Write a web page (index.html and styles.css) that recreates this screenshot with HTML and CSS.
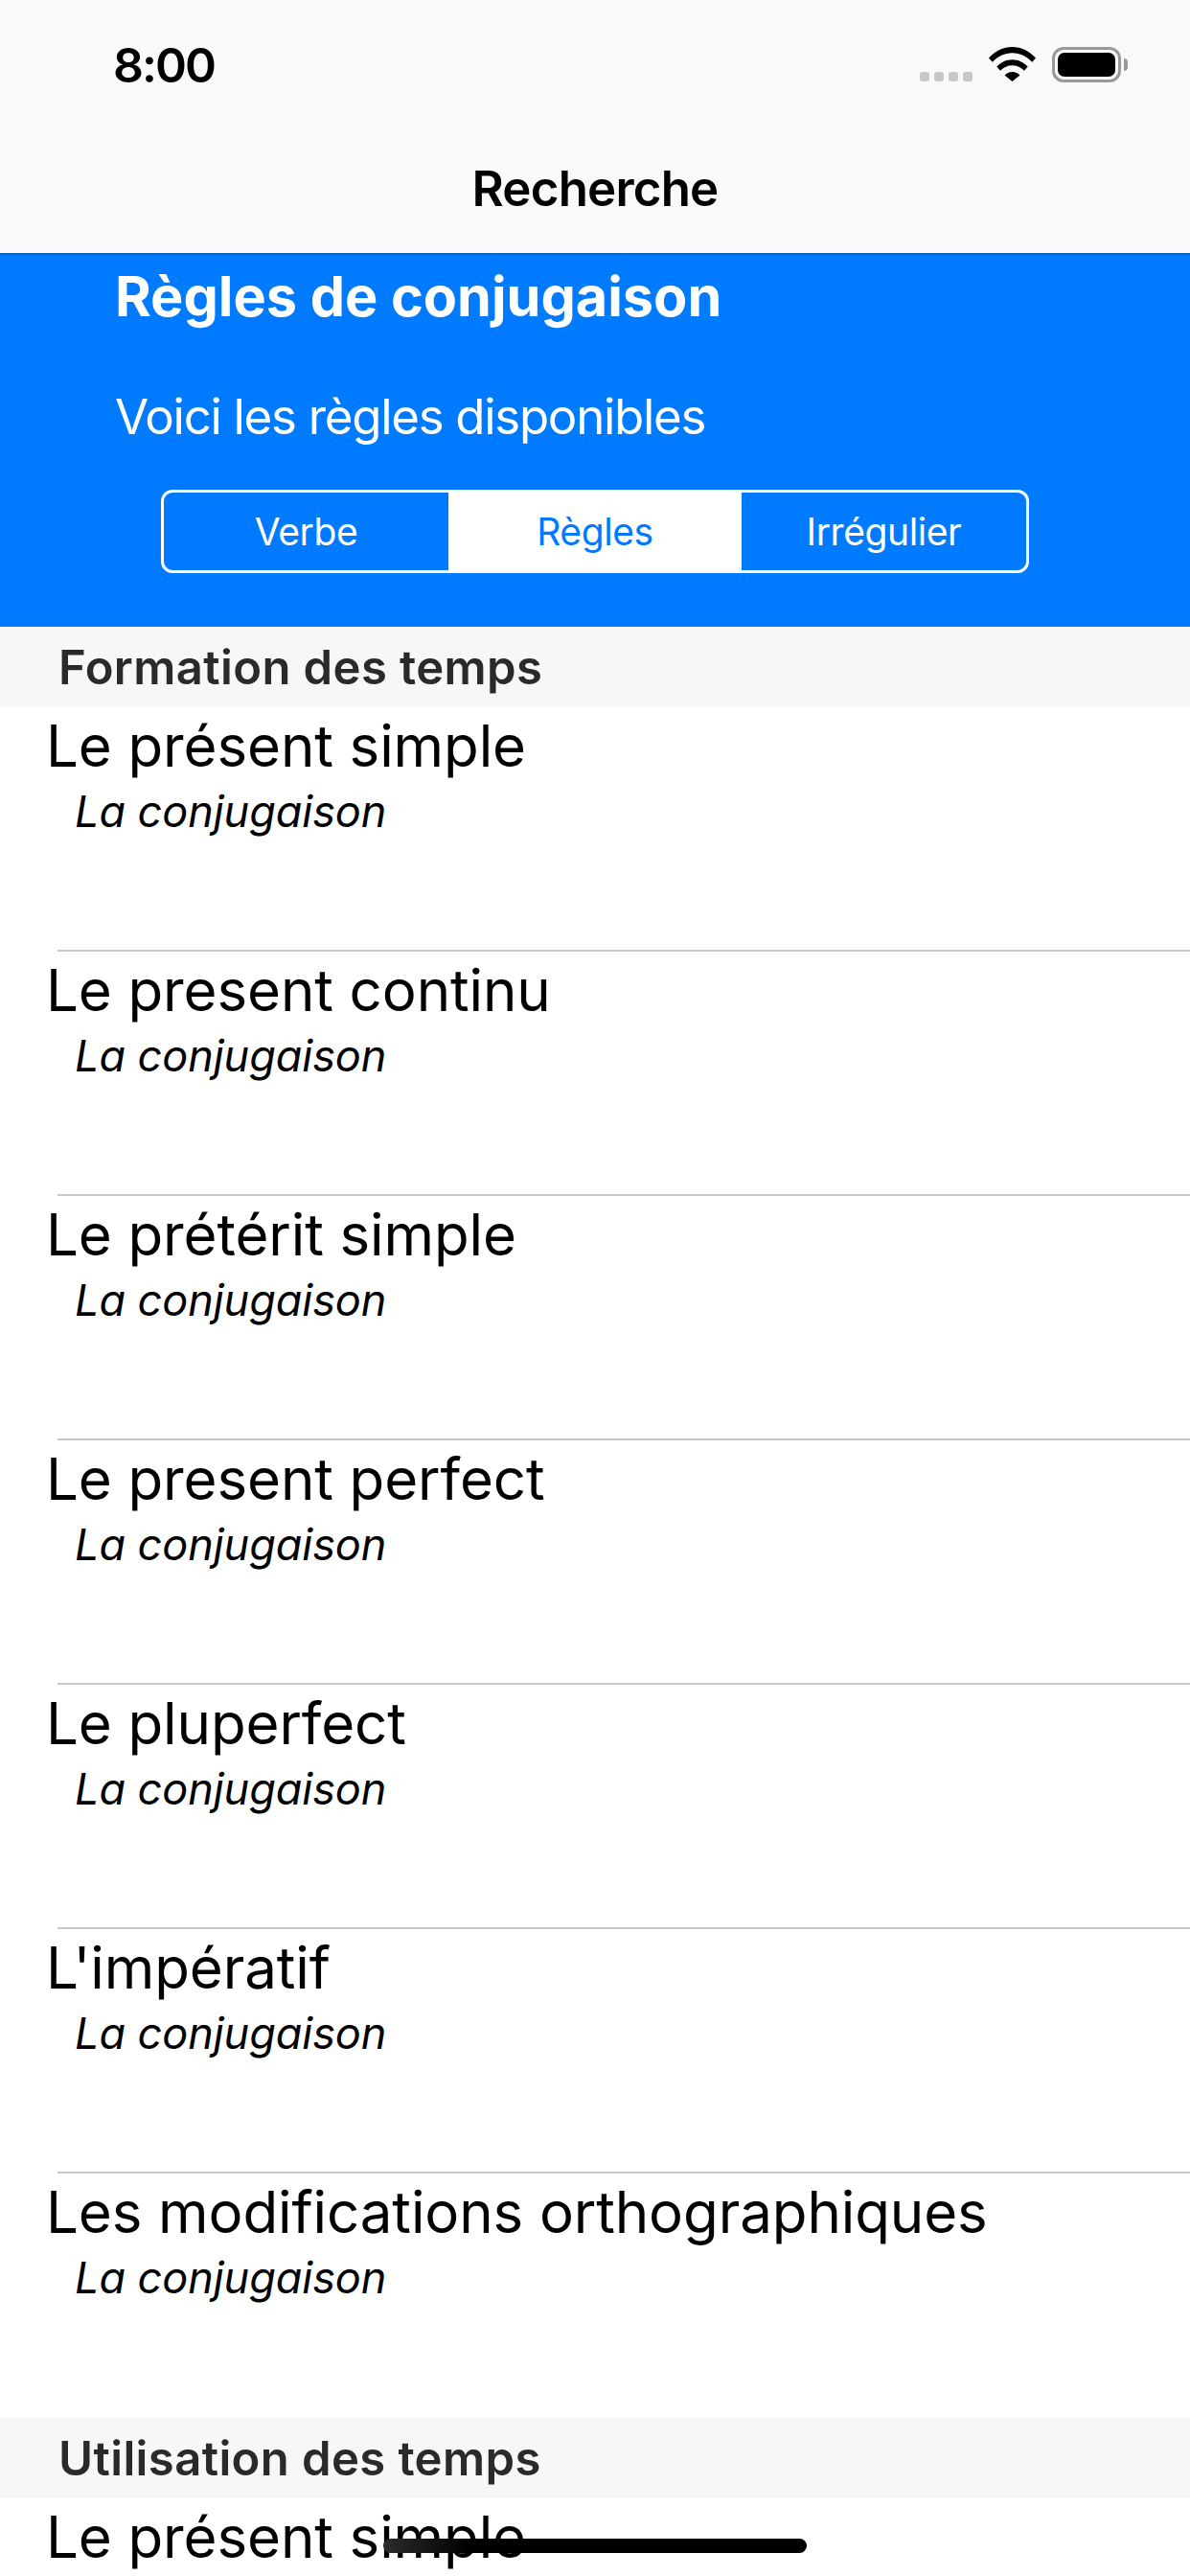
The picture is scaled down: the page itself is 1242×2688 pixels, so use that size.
FILE: index.html
```html
<!DOCTYPE html>
<html lang="fr">
<head>
<meta charset="utf-8">
<title>Recherche</title>
<link rel="stylesheet" href="styles.css">
</head>
<body>
<div class="screen">
  <header class="topbar">
    <div class="status">
      <span class="time">8:00</span>
      <div class="status-icons">
        <div class="signal"><i></i><i></i><i></i><i></i></div>
        <svg class="wifi" viewBox="0 0 49 36" width="49" height="36"><path d="M0 11.6C6.500 4.300 15 0 24.500 0S42.500 4.300 49 11.600L45.300 15.800C39.800 9.800 32.500 6.200 24.500 6.200S9.200 9.800 3.700 15.800Z"/><path d="M8.300 20.500C12.500 16 18.200 13.200 24.500 13.200S36.500 16 40.700 20.500L37 24.700C33.700 21.200 29.300 19.200 24.500 19.200S15.300 21.200 12 24.700Z"/><path d="M16.500 29.500C18.600 27.300 21.400 26 24.500 26S30.400 27.300 32.500 29.500L24.500 36Z"/></svg>
        <div class="battery"><div class="battery-fill"></div></div>
        <div class="battery-cap"></div>
      </div>
    </div>
    <div class="nav-title">Recherche</div>
  </header>
  <section class="hero">
    <h1 class="hero-title">Règles de conjugaison</h1>
    <p class="hero-sub">Voici les règles disponibles</p>
    <div class="segments">
      <div class="segment">Verbe</div>
      <div class="segment active">Règles</div>
      <div class="segment">Irrégulier</div>
    </div>
  </section>
  <main class="list">
    <h2 class="section-head">Formation des temps</h2>
    <div class="row"><div class="row-title">Le présent simple</div><div class="row-sub">La conjugaison</div></div>
    <div class="row"><div class="row-title">Le present continu</div><div class="row-sub">La conjugaison</div></div>
    <div class="row"><div class="row-title">Le prétérit simple</div><div class="row-sub">La conjugaison</div></div>
    <div class="row"><div class="row-title">Le present perfect</div><div class="row-sub">La conjugaison</div></div>
    <div class="row"><div class="row-title">Le pluperfect</div><div class="row-sub">La conjugaison</div></div>
    <div class="row"><div class="row-title">L'impératif</div><div class="row-sub">La conjugaison</div></div>
    <div class="row last"><div class="row-title">Les modifications orthographiques</div><div class="row-sub">La conjugaison</div></div>
    <h2 class="section-head">Utilisation des temps</h2>
    <div class="row peek"><div class="row-title">Le présent simple</div></div>
  </main>
  <div class="home-indicator"></div>
</div>
</body>
</html>
```
FILE: styles.css
```css
* { box-sizing: border-box; }
html, body { margin: 0; padding: 0; background: #fff; }
body { font-family: Inter, "Liberation Sans", sans-serif; color: #000; }
.screen { position: relative; width: 1242px; height: 2688px; overflow: hidden; background: #fff; }

.topbar { height: 264px; background: #f9f9f9; display: flex; flex-direction: column; }
.status { height: 132px; display: flex; align-items: flex-start; justify-content: space-between; padding: 49px 65px 0 118px; }
.time { font-size: 50px; font-weight: 600; line-height: 38px; letter-spacing: -2px; }
.status-icons { display: flex; align-items: flex-start; }
.signal { display: flex; gap: 5px; margin-top: 26px; margin-right: 17px; }
.signal i { display: block; width: 10px; height: 10px; border-radius: 3px; background: #c8c8c8; }
.wifi { display: block; margin-right: 17px; fill: #000; }
.battery { width: 72px; height: 37px; border: 3px solid #999; border-radius: 12px; padding: 3px; }
.battery-fill { width: 100%; height: 100%; background: #000; border-radius: 7px; }
.battery-cap { width: 4px; height: 13px; margin: 12px 0 0 3px; background: #999; border-radius: 0 4px 4px 0; }
.nav-title { text-align: center; font-size: 51px; font-weight: 600; line-height: 62px; margin-top: 34px; letter-spacing: -0.8px; }

.hero { height: 390px; background: #007aff; color: #fff; padding: 0 0 0 120px; border-top: 2px solid #0a62bd; }
.hero-title { margin: 0; font-size: 57.6px; font-weight: 700; line-height: 70px; padding-top: 8px; }
.hero-sub { margin: 0; font-size: 51px; font-weight: 400; line-height: 62px; padding-top: 60px; letter-spacing: -1.3px; }
.segments { display: flex; width: 906px; height: 87px; margin: 45px 0 0 48px; border: 3px solid #fff; border-radius: 12px; overflow: hidden; }
.segment { flex: 0 0 auto; width: 297px; display: flex; align-items: center; justify-content: center; font-size: 39px; line-height: 1; letter-spacing: -0.4px; }
.segment.active { width: 306px; background: #fff; color: #007aff; }

.section-head { margin: 0; height: 84px; background: #f7f7f7; color: #2a2a2a; font-size: 49px; font-weight: 600; line-height: 86px; padding-left: 61px; letter-spacing: 0.4px; }
.row { position: relative; height: 255px; padding-left: 48px; }
.row::after { content: ""; position: absolute; left: 60px; right: 0; bottom: 0; height: 2px; background: #c8c7cc; }
.row.last::after, .row.peek::after { display: none; }
.row-title { font-size: 60px; line-height: 72px; padding-top: 4px; letter-spacing: -0.1px; }
.row-sub { font-size: 45px; font-style: italic; line-height: 54px; padding-left: 30px; margin-top: 6px; letter-spacing: -0.05px; }

.home-indicator { position: absolute; left: 400px; top: 2649px; width: 442px; height: 15px; border-radius: 8px; background: linear-gradient(90deg, #2c2c2c, #000 90px); }
```
